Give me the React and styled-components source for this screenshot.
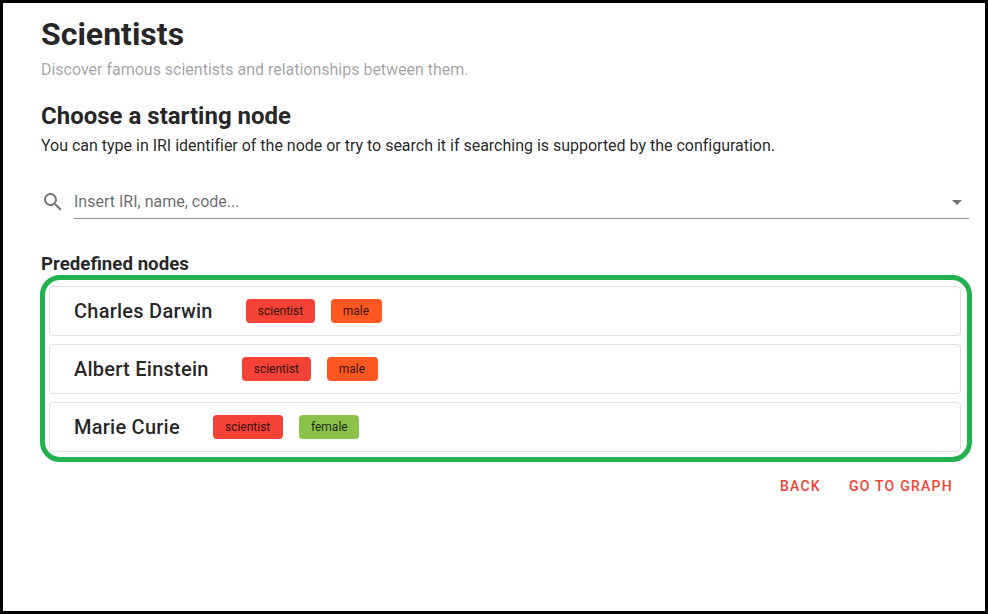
import React from 'react';
import styled, { createGlobalStyle } from 'styled-components';

const GlobalStyle = createGlobalStyle`
  * { box-sizing: border-box; }
  body { margin: 0; font-family: Roboto, sans-serif; color: rgba(0,0,0,.87); background: #fff; }
`;
const Page = styled.main`
  height: 614px;
  border: 3px solid #000;
  padding: 11px 16px 0 38px;
  overflow: hidden;
`;
const Title = styled.h1`margin: 0; font-size: 32px; line-height: 40px; font-weight: 700;`;
const Subtitle = styled.p`margin: 6px 0 0; font-size: 16px; line-height: 20px; font-weight: 400; letter-spacing: -.01px; color: rgba(0,0,0,.38);`;
const Heading = styled.h2`margin: 21px 0 0; font-size: 24px; line-height: 30px; font-weight: 700;`;
const Hint = styled.p`margin: 5px 0 0; font-size: 16px; line-height: 20px; font-weight: 400; letter-spacing: -.01px;`;
const Search = styled.label`display: flex; margin-top: 29px; height: 34px; align-items: flex-start;`;
const SearchIcon = styled.svg`width: 24px; height: 24px; margin-top: 5px; fill: #757575; flex: none;`;
const Field = styled.span`
  flex: 1; height: 34px; margin-left: 9px; border-bottom: 1px solid #949494;
  display: flex; align-items: center; justify-content: space-between;
  font-size: 16px; font-weight: 400; color: rgba(0,0,0,.6);
`;
const Arrow = styled.svg`width: 24px; height: 24px; fill: #757575;`;
const Subheading = styled.h3`margin: 33px 0 0; font-size: 18.72px; line-height: 24px; font-weight: 700;`;
const NodeList = styled.section`
  margin: -1px -3px 0 -1px; height: 187px; border: 5px solid #22b14c; border-radius: 20px;
  padding: 6px 6px 0 4px; display: flex; flex-direction: column; gap: 8px;
`;
const NodeCard = styled.article`
  display: flex; align-items: center; height: 50px; border: 1px solid #e0e0e0;
  border-radius: 4px; padding-left: 24px; flex: none;
`;
const Name = styled.span`font-size: 20px; font-weight: 500; letter-spacing: .25px; margin-right: 33px;`;
const Chip = styled.span`
  height: 24px; padding: 0 12px; margin-right: 16px; border-radius: 4px;
  display: flex; align-items: center; font-size: 12px; font-weight: 400;
  width: ${p => p.$width}px; white-space: nowrap;
  background: ${p => p.$color}; color: rgba(0,0,0,.82);
`;
const Actions = styled.footer`display: flex; justify-content: flex-end; margin-top: 6px; gap: 28px; padding-right: 16px;`;
const TextButton = styled.button`
  border: 0; padding: 0; background: none; height: 36px; color: #f44336;
  font: 500 14px Roboto, sans-serif; letter-spacing: 1.25px; text-transform: uppercase;
`;
const nodes = [
  ['Charles Darwin', 69, 'male', 51, '#ff5722'],
  ['Albert Einstein', 69, 'male', 51, '#ff5722'],
  ['Marie Curie', 70, 'female', 60, '#8bc34a'],
];

export default function App() {
  return (
    <Page>
      <GlobalStyle />
      <Title>Scientists</Title>
      <Subtitle>Discover famous scientists and relationships between them.</Subtitle>
      <Heading>Choose a starting node</Heading>
      <Hint>You can type in IRI identifier of the node or try to search it if searching is supported by the configuration.</Hint>
      <Search>
        <SearchIcon viewBox="0 0 24 24"><path d="M9.5,3A6.5,6.5 0 0,1 16,9.5C16,11.11 15.41,12.59 14.44,13.73L14.71,14H15.5L20.5,19L19,20.5L14,15.5V14.71L13.73,14.44C12.59,15.41 11.11,16 9.5,16A6.5,6.5 0 0,1 3,9.5A6.5,6.5 0 0,1 9.5,3M9.5,5C7,5 5,7 5,9.5C5,12 7,14 9.5,14C12,14 14,12 14,9.5C14,7 12,5 9.5,5Z" /></SearchIcon>
        <Field>Insert IRI, name, code...<Arrow viewBox="0 0 24 24"><path d="M7,10L12,15L17,10H7Z" /></Arrow></Field>
      </Search>
      <Subheading>Predefined nodes</Subheading>
      <NodeList>
        {nodes.map(([name, roleWidth, tag, tagWidth, color]) => (
          <NodeCard key={name}>
            <Name>{name}</Name>
            <Chip $color="#f44336" $width={roleWidth}>scientist</Chip>
            <Chip $color={color} $width={tagWidth}>{tag}</Chip>
          </NodeCard>
        ))}
      </NodeList>
      <Actions><TextButton>Back</TextButton><TextButton>Go to graph</TextButton></Actions>
    </Page>
  );
}
